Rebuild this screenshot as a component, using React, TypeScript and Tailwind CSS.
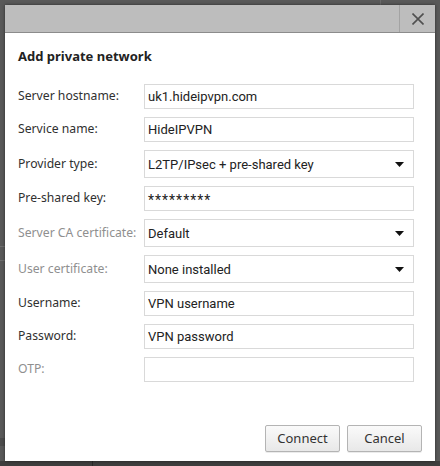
type Row = {
  label: string;
  value: string;
  kind: "input" | "select";
  disabled?: boolean;
  masked?: boolean;
};

const rows: Row[] = [
  { label: "Server hostname:", value: "uk1.hideipvpn.com", kind: "input" },
  { label: "Service name:", value: "HideIPVPN", kind: "input" },
  { label: "Provider type:", value: "L2TP/IPsec + pre-shared key", kind: "select" },
  { label: "Pre-shared key:", value: "*********", kind: "input", masked: true },
  { label: "Server CA certificate:", value: "Default", kind: "select", disabled: true },
  { label: "User certificate:", value: "None installed", kind: "select", disabled: true },
  { label: "Username:", value: "VPN username", kind: "input" },
  { label: "Password:", value: "VPN password", kind: "input" },
  { label: "OTP:", value: "", kind: "input", disabled: true },
];

function Field({ row }: { row: Row }) {
  const isSelect = row.kind === "select";
  return (
    <div className="flex items-center">
      <div
        className={`w-[126px] shrink-0 text-[12.2px] ${
          row.disabled ? "text-[#8f8f8f]" : "text-[#303030]"
        }`}
      >
        {row.label}
      </div>
      <div
        className={`flex w-[270px] items-center justify-between border border-[#d9d9d9] bg-white pl-[3px] pr-[9px] font-['Roboto',sans-serif] text-[13px] text-[#222222] ${
          isSelect ? "h-[28px]" : "h-[25px]"
        }`}
      >
        <span className={row.masked ? "pt-[3px] text-[14px] leading-none tracking-[1px]" : "leading-none"}>
          {row.value}
        </span>
        {isSelect && (
          <svg width="9" height="5" viewBox="0 0 9 5">
            <path d="M0 0h9L4.5 5z" fill="#111" />
          </svg>
        )}
      </div>
    </div>
  );
}

function Button({ label }: { label: string }) {
  return (
    <button className="h-[27px] w-[75px] rounded-[2px] border border-[#b4b4b4] bg-gradient-to-b from-[#fafafa] to-[#e8e8e8] text-[13px] text-[#333333] shadow-[0_1px_0_rgba(0,0,0,0.08)]">
      {label}
    </button>
  );
}

export default function App() {
  return (
    <div className="relative h-[466px] w-[440px] overflow-hidden bg-[#595959] font-['Noto_Sans','Open_Sans',sans-serif]">
      {/* faint page behind the overlay */}
      <div className="absolute left-[380px] top-0 h-[6px] w-px bg-[#6a6a6a]" />
      <div className="absolute left-0 top-[246px] h-px w-[6px] bg-[#6e6e6e]" />
      <div className="absolute left-0 top-[260px] h-px w-[6px] bg-[#6e6e6e]" />
      <div className="absolute left-0 top-[438px] h-[8px] w-[6px] bg-[#4c4c4c]" />
      <div className="absolute bottom-0 left-0 h-[5px] w-full bg-[#3e3e3e]" />
      <div className="absolute bottom-0 left-[92px] h-[5px] w-px bg-[#2a2a2a]" />

      <div className="absolute left-[5px] top-[5px] flex h-[456px] w-[430px] flex-col bg-white shadow-[0_0_3px_rgba(0,0,0,0.5)]">
        <div className="flex h-[28px] shrink-0 border-b border-[#8c8c8c] bg-[#bdbdbd]">
          <div className="flex-1" />
          <div className="flex w-[36px] items-center justify-center border-l border-[#a3a3a3]">
            <svg width="12" height="12" viewBox="0 0 12 12">
              <path d="M0.5 0.5L11.5 11.5M11.5 0.5L0.5 11.5" stroke="#505050" strokeWidth="1.6" />
            </svg>
          </div>
        </div>

        <div className="flex flex-1 flex-col pl-[13px] pr-[21px]">
          <h1 className="mt-[13px] text-[13px] font-bold leading-[20px] text-[#222222]">
            Add private network
          </h1>
          <div className="mt-[18px] flex flex-col gap-2">
            {rows.map((row) => (
              <Field key={row.label} row={row} />
            ))}
          </div>
          <div className="mt-auto mb-[9px] -mr-[8px] flex justify-end gap-[7px]">
            <Button label="Connect" />
            <Button label="Cancel" />
          </div>
        </div>
      </div>
    </div>
  );
}
